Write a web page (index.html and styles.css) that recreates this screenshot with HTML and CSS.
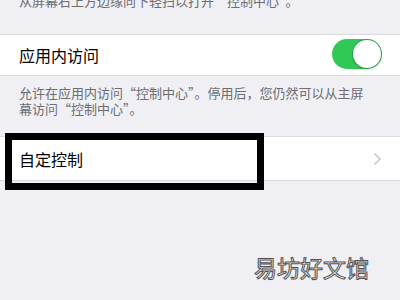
FILE: index.html
```html
<!DOCTYPE html>
<html lang="zh-CN">
<head>
    <meta charset="UTF-8">
    <meta name="viewport" content="width=device-width, initial-scale=1.0">
    <title>控制中心</title>
    <link rel="stylesheet" href="styles.css">
</head>
<body>
    <p class="note note-top">从屏幕右上方边缘向下轻扫以打开“控制中心”。</p>

    <div class="group group-access">
        <div class="row">
            <span class="label">应用内访问</span>
            <div class="switch on"><div class="knob"></div></div>
        </div>
    </div>
    <p class="note">允许在应用内访问“控制中心”。停用后，您仍然可以从主屏幕访问“控制中心”。</p>

    <div class="group group-custom">
        <div class="row row-tall">
            <span class="label">自定控制</span>
            <span class="chevron">
                <svg width="9" height="14" viewBox="0 0 9 14">
                    <path d="M1.5 1.5 L7 7 L1.5 12.5" fill="none" stroke="#c7c7cc" stroke-width="1.6"/>
                </svg>
            </span>
        </div>
    </div>

    <div class="highlight"></div>
    <div class="watermark">易坊好文馆</div>
</body>
</html>
```

FILE: styles.css
```css
body {
    margin: 0;
    padding: 0;
    width: 400px;
    height: 300px;
    overflow: hidden;
    position: relative;
    background-color: #efeff4;
    font-family: "Noto Sans CJK SC", "Noto Sans", sans-serif;
    color: #000;
}
.note {
    margin: 0;
    padding: 9px 30px 0 19px;
    font-size: 13px;
    line-height: 16px;
    color: #6d6d72;
}
.note-top {
    margin-top: -7px;
    padding-top: 0;
    height: 26px;
}
.group {
    background: #fff;
    border-top: 1px solid #dadade;
    border-bottom: 1px solid #dadade;
}
.group-access {
    margin-top: 15px;
}
.group-custom {
    margin-top: 19px;
}
.row {
    display: flex;
    align-items: center;
    height: 40px;
    padding: 0 18px 0 19px;
}
.row-tall {
    height: 43px;
}
.label {
    font-size: 16px;
    line-height: 20px;
}
.switch {
    margin-left: auto;
    width: 50px;
    height: 30px;
    border-radius: 15px;
    background: #30c957;
    position: relative;
    margin-top: -2px;
}
.switch .knob {
    position: absolute;
    top: 1px;
    right: 1px;
    width: 28px;
    height: 28px;
    border-radius: 50%;
    background: #fff;
    box-shadow: 0 0 0 1px rgba(20, 110, 50, 0.35), 0 2px 3px rgba(0, 0, 0, 0.15);
}
.chevron {
    margin-left: auto;
    display: flex;
    margin-right: 0;
}
/* annotation box drawn over the screenshot */
.highlight {
    position: absolute;
    left: 5px;
    top: 133px;
    width: 245px;
    height: 43px;
    border: 7px solid #000;
}
.watermark {
    position: absolute;
    left: 254px;
    top: 252px;
    font-size: 23px;
    line-height: 30px;
    letter-spacing: 0;
    color: #fff;
    -webkit-text-stroke: 1px #555;
    text-shadow: 0 0 1px #999;
}
```
